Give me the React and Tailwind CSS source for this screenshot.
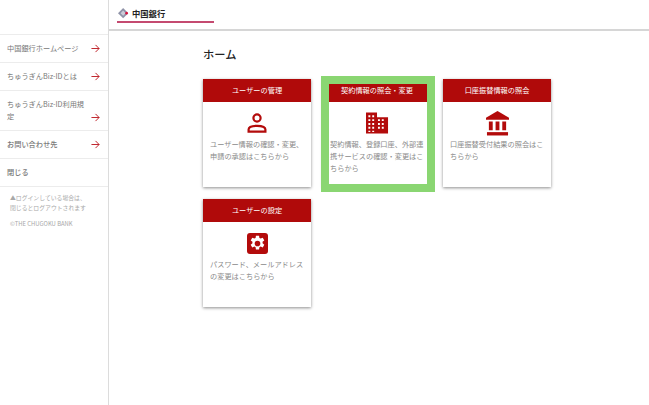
const font = { fontFamily: '"Noto Sans CJK JP", "Noto Sans", sans-serif' };

function Arrow({ className = "" }) {
  return (
    <svg viewBox="0 0 10 10" className={`w-[9px] h-[9px] shrink-0 ${className}`} fill="none" stroke="#c0262e" strokeWidth="1.1">
      <path d="M0.5 5H9M5 1l4 4-4 4" />
    </svg>
  );
}

function NavRow({ label, tall, arrow = true, bold }) {
  return (
    <div className={`flex border-b border-[#ececec] pl-[7px] pr-[8px] ${tall ? "h-[40px] pt-[7px]" : "h-[28px] items-center"}`}>
      <span className={`flex-1 text-[7.2px] text-[#777] ${tall ? "leading-[12px]" : ""} ${bold ? "font-medium" : ""}`}>{label}</span>
      {arrow && <Arrow className={tall ? "self-end mb-[8px]" : ""} />}
    </div>
  );
}

function UserIcon() {
  return (
    <svg viewBox="0 0 20 20" className="w-[20px] h-[20px]" fill="none" stroke="#b30b0b" strokeWidth="2.2">
      <circle cx="10" cy="5" r="3.6" />
      <path d="M1.6 18.6v-2.2c0-2.2 3.6-3.6 8.4-3.6s8.4 1.400 8.400 3.600v2.200z" />
    </svg>
  );
}

function BuildingIcon() {
  return (
    <svg viewBox="0 0 24 22" className="w-[23px] h-[22px]" fill="#b30b0b">
      <path fillRule="evenodd" d="M0 0h11.500v5H23v17H0zM2.500 3v2h2V3zm4 0v2h2V3zM2.500 7v2h2V7zm4 0v2h2V7zm6 0v2h2V7zm4 0v2h2V7zM2.500 11v2h2v-2zm4 0v2h2v-2zm6 0v2h2v-2zm4 0v2h2v-2zM2.500 15v2h2v-2zm4 0v2h2v-2zm6 0v2h2v-2zm4 0v2h2v-2zM2.500 19v1.500h2V19zm4 0v1.500h2V19z" />
    </svg>
  );
}

function BankIcon() {
  return (
    <svg viewBox="0 0 24 26" className="w-[23px] h-[25px]" fill="#b30b0b">
      <path d="M12 0L24 7v2H0V7z" />
      <path d="M3 11h4v9H3zM10 11h4v9h-4zM17 11h4v9h-4z" />
      <path d="M1 22h22v3.500H1z" />
    </svg>
  );
}

function GearIcon() {
  return (
    <div className="w-[21px] h-[21px] rounded-[3px] bg-[#b30b0b] flex items-center justify-center">
      <svg viewBox="0 0 24 24" className="w-[17px] h-[17px]" fill="#fff">
        <path fillRule="evenodd" d="M14.200 1l.5 3.100c.6.2 1.200.5 1.700.9l3-1.100 2.200 3.800-2.500 2c.1.7.1 1.300 0 2l2.500 2-2.200 3.800-3-1.100c-.5.4-1.100.7-1.700.9l-.5 3.100H9.800l-.5-3.100c-.6-.2-1.200-.5-1.700-.9l-3 1.100-2.200-3.800 2.500-2c-.1-.7-.1-1.300 0-2l-2.500-2 2.200-3.800 3 1.100c.5-.4 1.100-.7 1.700-.9L9.800 1zM12 8a4 4 0 100 8 4 4 0 000-8z" />
      </svg>
    </div>
  );
}

function Card({ title, icon, text, highlight }) {
  return (
    <div className="relative w-[108px] h-[108px] bg-white shadow-[0_1px_3px_rgba(0,0,0,0.45)]">
      <div className="h-[23px] bg-[#b00a0a] text-white text-[7.2px] flex items-center justify-center">{title}</div>
      <div className="h-[26px] mt-[8px] flex items-center justify-center">{icon}</div>
      <p className="mt-[2px] px-[7px] text-[7.2px] leading-[12px] text-[#8a8a8a]">{text}</p>
      {highlight && <div className="absolute -left-[2px] -top-[3px] w-[114px] h-[116px] border-8 border-[#8ad672]" />}
    </div>
  );
}

export default function App() {
  return (
    <div className="w-[649px] h-[405px] flex bg-white overflow-hidden" style={font}>
      <aside className="w-[109px] border-r border-[#dcdcdc] shrink-0 pt-[34px]">
        <div className="border-t border-[#ececec]">
          <NavRow label="中国銀行ホームページ" />
          <NavRow label="ちゅうぎんBiz-IDとは" />
          <NavRow label="ちゅうぎんBiz-ID利用規定" tall />
          <NavRow label="お問い合わせ先" bold />
          <NavRow label="閉じる" arrow={false} bold />
        </div>
        <div className="pl-[10px] pt-[6px] text-[5.85px] leading-[9.500px] text-[#a8a8a8]">
          <p>▲ログインしている場合は、</p>
          <p>閉じるとログアウトされます</p>
          <p className="mt-[7px]">©THE CHUGOKU BANK</p>
        </div>
      </aside>
      <div className="flex-1 min-w-0">
        <header className="h-[31px] border-b-2 border-[#d6d6d6] pl-[8px]">
          <div className="w-[97px] h-[23px] border-b-2 border-[#c44a70] flex items-center pl-[1px] pt-[6px] gap-[2px]">
            <svg viewBox="0 0 14 14" className="w-[12px] h-[12px]">
              <path d="M6 0l6 6-6 6-6-6z" fill="#8f93a8" />
              <path d="M6 3l3 3-3 3-3-3z" fill="#c9ccd8" />
              <circle cx="10" cy="6" r="1.500" fill="#d8103c" />
            </svg>
            <span className="text-[8.3px] font-bold text-[#222]">中国銀行</span>
          </div>
        </header>
        <main className="pl-[94px] pt-[14px]">
          <h1 className="text-[11.25px] font-medium text-[#222] leading-[18px]">ホーム</h1>
          <div className="mt-[16px] grid grid-cols-[108px_108px_108px] gap-x-[12px] gap-y-[12px]">
            <Card title="ユーザーの管理" icon={<UserIcon />} text="ユーザー情報の確認・変更、申請の承認はこちらから" />
            <Card title="契約情報の照会・変更" icon={<BuildingIcon />} text="契約情報、登録口座、外部連携サービスの確認・変更はこちらから" highlight />
            <Card title="口座振替情報の照会" icon={<BankIcon />} text="口座振替受付結果の照会はこちらから" />
            <Card title="ユーザーの設定" icon={<GearIcon />} text="パスワード、メールアドレスの変更はこちらから" />
          </div>
        </main>
      </div>
    </div>
  );
}
